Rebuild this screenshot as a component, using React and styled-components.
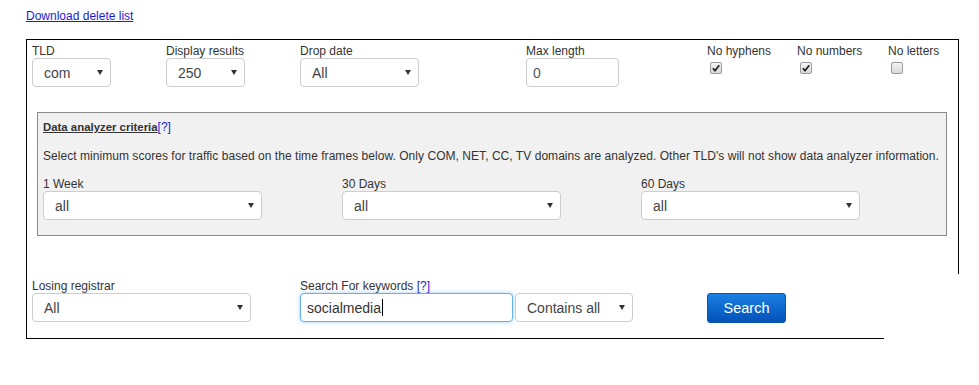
import React from 'react'
import styled, { createGlobalStyle } from 'styled-components'

const GlobalStyle = createGlobalStyle`
  body {
    margin: 0;
    background: #fff;
    font-family: "Liberation Sans", Arial, sans-serif;
    color: #333;
  }
`

function Select ({ value, width }) {
  return (
    <SelectBox width={width}>
      <span>{value}</span>
      <Arrow />
    </SelectBox>
  )
}

function Check ({ checked }) {
  return (
    <CheckBox>
      {checked && (
        <svg width='8' height='8' viewBox='0 0 8 8'>
          <path d='M0.8 4.2 L3 6.6 L7.3 1.2' fill='none' stroke='#222' strokeWidth='1.7' />
        </svg>
      )}
    </CheckBox>
  )
}

function App () {
  return (
    <Page>
      <GlobalStyle />
      <DownloadLink href='#'>Download delete list</DownloadLink>

      <Panel>
        <Row>
          <Field w={134}>
            <Label>TLD</Label>
            <Select value='com' width={79} />
          </Field>
          <Field w={134}>
            <Label>Display results</Label>
            <Select value='250' width={79} />
          </Field>
          <Field w={226}>
            <Label>Drop date</Label>
            <Select value='All' width={119} />
          </Field>
          <Field w={181}>
            <Label>Max length</Label>
            <TextBox width={93}>0</TextBox>
          </Field>
          <Field w={90}>
            <Label>No hyphens</Label>
            <Check checked />
          </Field>
          <Field w={91}>
            <Label>No numbers</Label>
            <Check checked />
          </Field>
          <Field>
            <Label>No letters</Label>
            <Check />
          </Field>
        </Row>

        <Analyzer>
          <Title>
            <strong>Data analyzer criteria</strong><Help>[?]</Help>
          </Title>
          <Info>
            Select minimum scores for traffic based on the time frames below. Only COM, NET, CC, TV domains are analyzed. Other TLD's will not show data analyzer information.
          </Info>
          <Row>
            <Field w={299}>
              <Label>1 Week</Label>
              <Select value='all' width={219} />
            </Field>
            <Field w={299}>
              <Label>30 Days</Label>
              <Select value='all' width={219} />
            </Field>
            <Field>
              <Label>60 Days</Label>
              <Select value='all' width={219} />
            </Field>
          </Row>
        </Analyzer>

        <BottomRow>
          <Field w={268}>
            <Label>Losing registrar</Label>
            <Select value='All' width={219} />
          </Field>
          <Field>
            <Label>Search For keywords <Help>[?]</Help></Label>
            <Inline>
              <TextBox width={213} focused>socialmedia<Caret /></TextBox>
              <Select value='Contains all' width={118} />
            </Inline>
          </Field>
          <SearchButton>Search</SearchButton>
        </BottomRow>
      </Panel>
    </Page>
  )
}

export default App

const Page = styled.div`
  padding: 9px 0 40px 26px;
`

const DownloadLink = styled.a`
  display: block;
  width: max-content;
  font-size: 12px;
  line-height: 14px;
  color: #1a1adb;
  text-decoration: underline;
`

const Panel = styled.div`
  position: relative;
  box-sizing: border-box;
  width: 933px;
  margin-top: 16px;
  padding: 4px 0 17px 5px;
  border-top: 1px solid #000;
  border-left: 1px solid #000;

  &::before {
    content: '';
    position: absolute;
    top: -1px;
    right: 0;
    width: 1px;
    height: 235px;
    background: #000;
  }

  &::after {
    content: '';
    position: absolute;
    bottom: 0;
    left: -1px;
    width: 858px;
    height: 1px;
    background: #000;
  }
`

const Row = styled.div`
  display: flex;
  align-items: flex-start;
`

const BottomRow = styled(Row)`
  margin-top: 43px;
  align-items: flex-end;
`

const Field = styled.div`
  display: flex;
  flex-direction: column;
  align-items: flex-start;
  width: ${p => (p.w ? `${p.w}px` : 'auto')};
  flex-shrink: 0;
`

const Label = styled.div`
  font-size: 12px;
  line-height: 14px;
  color: #333;
  white-space: nowrap;
`

const Help = styled.span`
  color: #1a1adb;
  font-weight: normal;
  font-size: 12px;
`

const SelectBox = styled.div`
  box-sizing: border-box;
  display: flex;
  align-items: center;
  justify-content: space-between;
  width: ${p => p.width}px;
  height: 29px;
  padding: 0 7px 0 11px;
  background: #fff;
  border: 1px solid #cdcdcd;
  border-radius: 4px;
  font-size: 14px;
  color: #444;
`

const Arrow = styled.span`
  width: 0;
  height: 0;
  border-left: 3px solid transparent;
  border-right: 3px solid transparent;
  border-top: 5px solid #333;
`

const TextBox = styled.div`
  box-sizing: border-box;
  display: flex;
  align-items: center;
  width: ${p => p.width}px;
  height: 29px;
  padding: 0 6px;
  background: #fff;
  border: 1px solid ${p => (p.focused ? '#66afe9' : '#cdcdcd')};
  border-radius: 4px;
  box-shadow: ${p => (p.focused ? '0 0 4px rgba(102, 175, 233, 0.6)' : 'none')};
  font-size: 14px;
  color: ${p => (p.focused ? '#333' : '#555')};
`

const Caret = styled.span`
  display: inline-block;
  width: 1px;
  height: 17px;
  margin-left: 1px;
  background: #000;
`

const Inline = styled.div`
  display: flex;
  gap: 2px;
`

const CheckBox = styled.span`
  box-sizing: border-box;
  display: flex;
  align-items: center;
  justify-content: center;
  width: 12px;
  height: 12px;
  margin: 4px 0 0 3px;
  border: 1px solid #9a9a9a;
  border-radius: 2px;
  background: linear-gradient(#f4f4f4, #d8d8d8);
`

const Analyzer = styled.div`
  box-sizing: border-box;
  width: 910px;
  margin: 25px 0 0 5px;
  padding: 7px 5px 15px 5px;
  background: #f1f1f1;
  border: 1px solid #8a8a8a;
`

const Title = styled.div`
  font-size: 11.4px;
  line-height: 14px;
  color: #333;

  strong {
    text-decoration: underline;
  }
`

const Info = styled.p`
  margin: 15px 0 14px;
  font-size: 12px;
  line-height: 14px;
  letter-spacing: 0.045px;
  color: #333;
  white-space: nowrap;
`

const SearchButton = styled.button`
  box-sizing: border-box;
  width: 79px;
  height: 30px;
  margin: 0 0 -1px 74px;
  padding: 0;
  border: 1px solid #0a55b0;
  border-radius: 3px;
  background: linear-gradient(#1a7fe2, #0452b8);
  color: #fff;
  font-family: "Liberation Sans", Arial, sans-serif;
  font-size: 14.5px;
`
